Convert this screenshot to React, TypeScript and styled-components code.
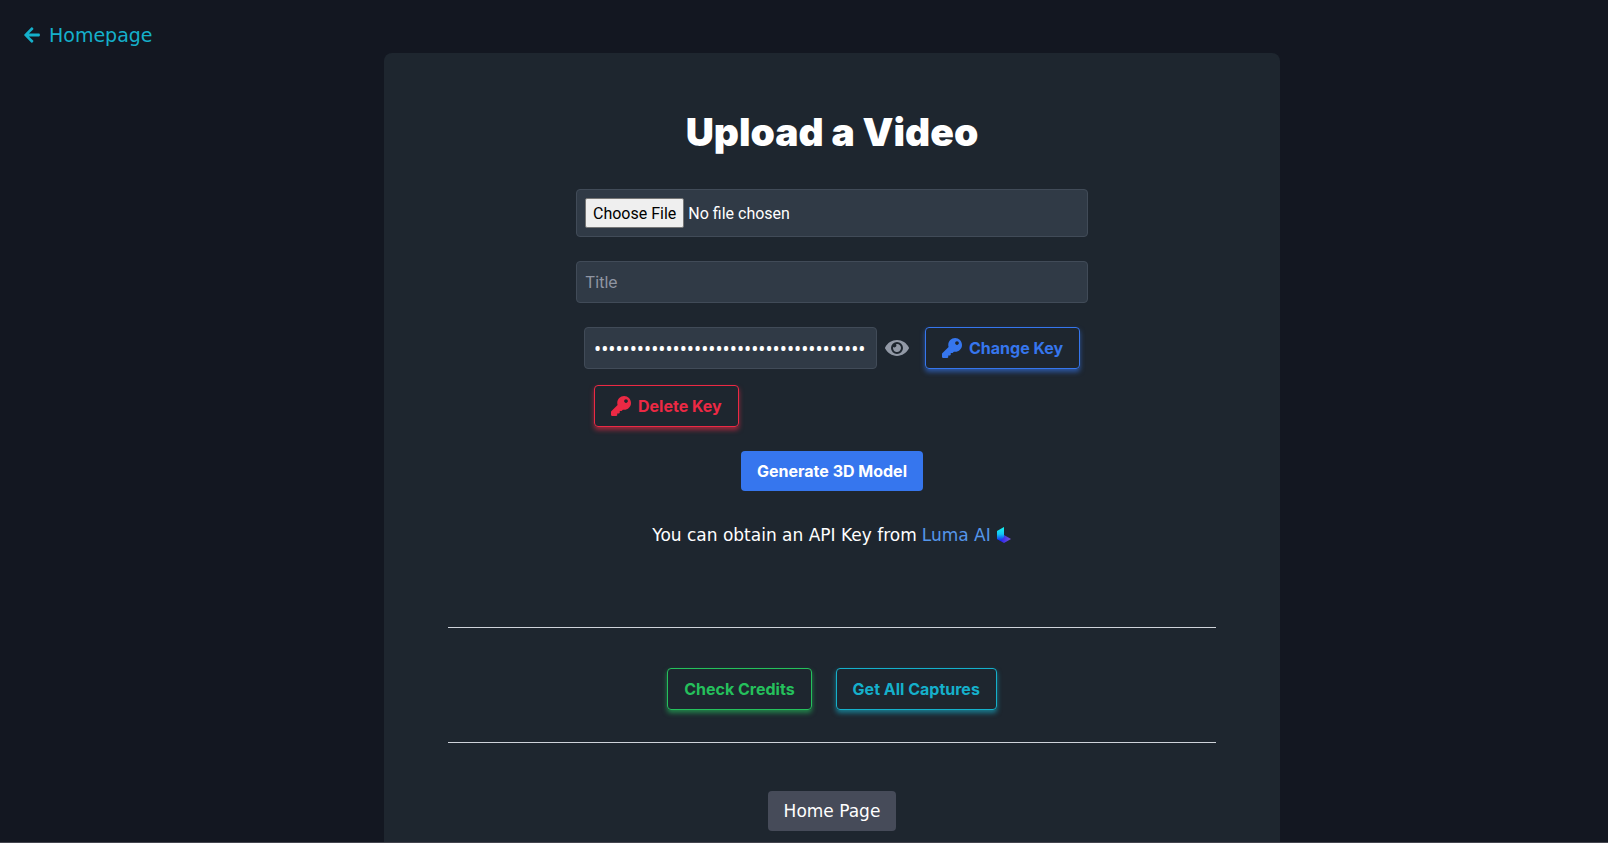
import React, { useState } from "react";
import styled, { createGlobalStyle } from "styled-components";
import { FaArrowLeft, FaEye, FaKey } from "react-icons/fa";

const displayFont = `"DejaVu Sans", sans-serif`;

const GlobalStyle = createGlobalStyle`
  *, *::before, *::after { box-sizing: border-box; }
  body {
    margin: 0;
    background: #131721;
    color: #ffffff;
    font: 400 16px/24px Inter, sans-serif;
  }
  input, button { font: inherit; }
`;

const Page = styled.div`
  display: flex;
  flex-direction: column;
  min-height: 100vh;
  border-bottom: 1px solid #44454f;
`;

const TopBar = styled.nav`
  height: 53px;
  padding: 21px 24px 0;
`;

const BackLink = styled.a`
  display: inline-flex;
  align-items: center;
  gap: 9px;
  color: #15b0cb;
  font: 400 19px/28px ${displayFont};
  text-decoration: none;

  svg { width: 16px; height: 18px; }
`;

const Main = styled.main`
  display: flex;
  flex: 1;
  justify-content: center;
  padding-left: 56px;
`;

const Card = styled.section`
  display: flex;
  flex-direction: column;
  align-items: center;
  width: 100%;
  max-width: 896px;
  padding: 55px 64px 10px;
  border-radius: 8px 8px 0 0;
  background: #1e262f;
`;

const Title = styled.h1`
  margin: 0 0 33px;
  font: 900 39px/48px Inter, sans-serif;
`;

const Form = styled.form`
  display: flex;
  flex-direction: column;
  align-items: center;
  gap: 24px;
  width: 100%;
  max-width: 512px;
`;

const Field = styled.input`
  width: 100%;
  height: 42px;
  padding: 8px;
  border: 1px solid #414b58;
  border-radius: 4px;
  outline: none;
  background: #303a46;
  color: #ffffff;

  &::placeholder { color: #9096a3; opacity: 1; }
`;

const FileField = styled(Field)`
  height: 48px;
  font: 400 16px/24px Roboto, sans-serif;

  &::file-selector-button {
    height: 30px;
    margin: 0 4px 0 0;
    padding: 2px 7px 0;
    border: 1px solid #767676;
    border-radius: 2px;
    background: #efefef;
    color: #000000;
    font: inherit;
  }
`;

const KeyRow = styled.div`
  display: flex;
  flex-wrap: wrap;
  align-items: center;
  row-gap: 16px;
  width: 100%;
  padding: 0 4px 0 8px;
`;

const KeyField = styled(Field)`
  width: 293px;
  padding: 10px 8px 8px 9px;
  font: 400 19px/24px "Noto Sans", sans-serif;
`;

const IconButton = styled.button`
  display: flex;
  padding: 0;
  margin: 0 16px 0 8px;
  border: 0;
  background: none;
  color: #9299a6;
  cursor: pointer;
`;

const OutlineButton = styled.button<{ $color: string; $indent?: boolean }>`
  display: inline-flex;
  align-items: center;
  gap: 7px;
  height: 42px;
  padding: 0 16px;
  margin-left: ${(p) => (p.$indent ? "10px" : "0")};
  border: 1px solid ${(p) => p.$color};
  border-radius: 4px;
  box-shadow: 0 3px 5px ${(p) => p.$color}99;
  background: transparent;
  color: ${(p) => p.$color};
  font-weight: 700;
  cursor: pointer;
`;

const SubmitButton = styled.button`
  height: 40px;
  padding: 0 16px;
  border: 0;
  border-radius: 4px;
  background: #3676ee;
  color: #ffffff;
  font-weight: 700;
  cursor: pointer;
`;

const Hint = styled.p`
  display: flex;
  flex-wrap: wrap;
  align-items: center;
  justify-content: center;
  column-gap: 5px;
  margin: 32px 0 80px;
  font: 400 17px/24px ${displayFont};
`;

const HintLink = styled.a`
  display: inline-flex;
  align-items: center;
  gap: 5px;
  color: #5596ea;
  text-decoration: none;
`;

const Rule = styled.hr`
  width: 100%;
  height: 1px;
  margin: 0;
  border: 0;
  background: #cfd3da;
`;

const Actions = styled.div`
  display: flex;
  gap: 24px;
  padding: 40px 0 32px;
`;

const HomeButton = styled.button`
  height: 40px;
  margin-top: 48px;
  padding: 0 16px;
  border: 0;
  border-radius: 4px;
  background: #464b59;
  color: #ffffff;
  font: 400 17px/24px ${displayFont};
  cursor: pointer;
`;

function LumaLogo() {
  return (
    <svg width="16" height="16" viewBox="0 0 16 16" aria-hidden="true">
      <defs>
        <linearGradient id="lumaSide" x1="0" y1="0" x2="0" y2="1">
          <stop offset="0" stopColor="#16f5ee" />
          <stop offset="0.5" stopColor="#12c8f5" />
          <stop offset="1" stopColor="#1420e8" />
        </linearGradient>
        <linearGradient id="lumaBase" x1="0" y1="0" x2="1" y2="0">
          <stop offset="0" stopColor="#0a12f5" />
          <stop offset="1" stopColor="#7a55d8" />
        </linearGradient>
      </defs>
      <path d="M8 8L15 12L8 16L1 12Z" fill="url(#lumaBase)" />
      <path d="M1 4L8 0V10L5 14L1 12Z" fill="url(#lumaSide)" />
    </svg>
  );
}

export default function App() {
  const [visible, setVisible] = useState(false);
  const [apiKey, setApiKey] = useState("0123456789abcdef0123456789abcdef012345");
  return (
    <Page>
      <GlobalStyle />
      <TopBar>
        <BackLink href="#home">
          <FaArrowLeft />
          Homepage
        </BackLink>
      </TopBar>
      <Main>
        <Card>
          <Title>Upload a Video</Title>
          <Form onSubmit={(e) => e.preventDefault()}>
            <FileField type="file" accept="video/*" aria-label="Video file" />
            <Field type="text" placeholder="Title" aria-label="Title" />
            <KeyRow>
              <KeyField
                type={visible ? "text" : "password"}
                value={apiKey}
                onChange={(e) => setApiKey(e.target.value)}
                aria-label="API key"
              />
              <IconButton type="button" aria-label="Show key" onClick={() => setVisible(!visible)}>
                <FaEye size={24} />
              </IconButton>
              <OutlineButton type="button" $color="#3676ee">
                <FaKey size={20} />
                Change Key
              </OutlineButton>
              <OutlineButton type="button" $color="#ec2944" $indent>
                <FaKey size={20} />
                Delete Key
              </OutlineButton>
            </KeyRow>
            <SubmitButton type="submit">Generate 3D Model</SubmitButton>
          </Form>
          <Hint>
            You can obtain an API Key from
            <HintLink href="#luma">
              Luma AI
              <LumaLogo />
            </HintLink>
          </Hint>
          <Rule />
          <Actions>
            <OutlineButton type="button" $color="#25c05c">Check Credits</OutlineButton>
            <OutlineButton type="button" $color="#15b0cb">Get All Captures</OutlineButton>
          </Actions>
          <Rule />
          <HomeButton type="button">Home Page</HomeButton>
        </Card>
      </Main>
    </Page>
  );
}
